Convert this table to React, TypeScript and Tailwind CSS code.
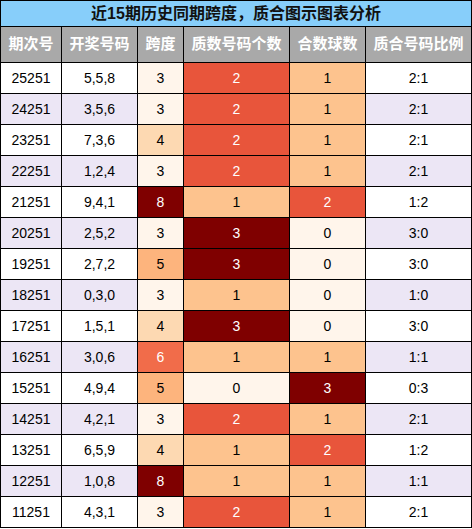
const rows: [string, string, number, number, number, string][] = [
  ["25251", "5,5,8", 3, 2, 1, "2:1"],
  ["24251", "3,5,6", 3, 2, 1, "2:1"],
  ["23251", "7,3,6", 4, 2, 1, "2:1"],
  ["22251", "1,2,4", 3, 2, 1, "2:1"],
  ["21251", "9,4,1", 8, 1, 2, "1:2"],
  ["20251", "2,5,2", 3, 3, 0, "3:0"],
  ["19251", "2,7,2", 5, 3, 0, "3:0"],
  ["18251", "0,3,0", 3, 1, 0, "1:0"],
  ["17251", "1,5,1", 4, 3, 0, "3:0"],
  ["16251", "3,0,6", 6, 1, 1, "1:1"],
  ["15251", "4,9,4", 5, 0, 3, "0:3"],
  ["14251", "4,2,1", 3, 2, 1, "2:1"],
  ["13251", "6,5,9", 4, 1, 2, "1:2"],
  ["12251", "1,0,8", 8, 1, 1, "1:1"],
  ["11251", "4,3,1", 3, 2, 1, "2:1"],
];

const spanCls: Record<number, string> = {
  3: "bg-[#fff5eb] text-black",
  4: "bg-[#fdd9b2] text-black",
  5: "bg-[#fdb47d] text-black",
  6: "bg-[#f16c4a] text-white",
  8: "bg-[#7f0000] text-white",
};

const countCls: Record<number, string> = {
  0: "bg-[#fff5eb] text-black",
  1: "bg-[#fdc38e] text-black",
  2: "bg-[#e8553b] text-white",
  3: "bg-[#7f0000] text-white",
};

const headers = ["期次号", "开奖号码", "跨度", "质数号码个数", "合数球数", "质合号码比例"];

export default function App() {
  return (
    <div className="w-[472px] bg-white font-['Liberation_Sans','Noto_Sans_CJK_SC',sans-serif]">
      <div className="grid grid-cols-[60px_75px_45px_105px_75px_105px] gap-px bg-black p-px">
        <div className="col-span-6 flex h-[25px] items-center justify-center bg-[#87cefa] text-[16px] font-bold text-[#111]">
          近15期历史同期跨度，质合图示图表分析
        </div>
        {headers.map((h) => (
          <div
            key={h}
            className="flex h-[35px] items-center justify-center bg-[#a9a9a9] text-[15px] font-bold text-white"
          >
            {h}
          </div>
        ))}
        {rows.map(([issue, nums, span, prime, comp, ratio], i) => {
          const base = i % 2 === 1 ? "bg-[#ece6f5] text-black" : "bg-white text-black";
          const cell = "flex h-[30px] items-center justify-center text-[14px]";
          return [
            <div key={issue + "a"} className={`${cell} ${base}`}>{issue}</div>,
            <div key={issue + "b"} className={`${cell} ${base}`}>{nums}</div>,
            <div key={issue + "c"} className={`${cell} ${spanCls[span]}`}>{span}</div>,
            <div key={issue + "d"} className={`${cell} ${countCls[prime]}`}>{prime}</div>,
            <div key={issue + "e"} className={`${cell} ${countCls[comp]}`}>{comp}</div>,
            <div key={issue + "f"} className={`${cell} ${base}`}>{ratio}</div>,
          ];
        })}
      </div>
    </div>
  );
}
